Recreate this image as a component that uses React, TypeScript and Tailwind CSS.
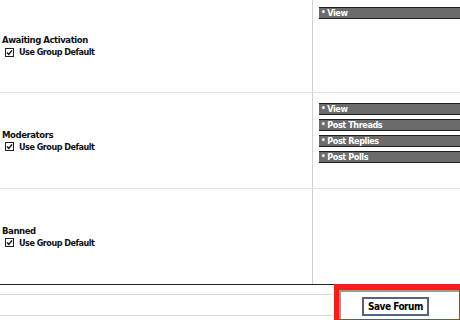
import React from "react"

const font = { fontFamily: '"DejaVu Sans Condensed", "DejaVu Sans", Verdana, sans-serif' }

function CheckBox() {
  return (
    <svg width="9" height="9" viewBox="0 0 9 9" className="shrink-0">
      <rect x="0.5" y="0.5" width="8" height="8" fill="#fff" stroke="#222" />
      <path d="M2 4.5 L3.8 6.5 L7 2.3" fill="none" stroke="#111" strokeWidth="1.4" />
    </svg>
  )
}

function PermBar({ label }: { label: string }) {
  return (
    <div className="h-[12px] bg-[#6b6b6b] border-y border-[#1e1e1e] flex items-center pl-[2px] text-white font-bold text-[9px] leading-none tracking-[-0.4px]">
      <span className="mr-[2px] text-[8px]">•</span>
      {label}
    </div>
  )
}

function GroupRow({ name, perms, height, top }: { name: string; perms: string[]; height: string; top: string }) {
  return (
    <div className={`flex ${height} border-b border-[#e2e2e2]`}>
      <div className="w-[312px] flex flex-col justify-center pl-[2px]">
        <div className="font-bold text-[9.5px] text-[#111] leading-[12px] tracking-[-0.45px]">{name}</div>
        <div className="flex items-center gap-[5px] pl-[3px] font-bold text-[9px] text-[#111] leading-[12px] tracking-[-0.5px]">
          <CheckBox />
          Use Group Default
        </div>
      </div>
      <div className={`flex-1 border-l border-[#d0d0d0] pl-[6px] ${top} flex flex-col gap-[4px]`}>
        {perms.map((p) => (
          <PermBar key={p} label={p} />
        ))}
      </div>
    </div>
  )
}

export default function App() {
  return (
    <div className="w-[460px] h-[320px] bg-white overflow-hidden relative" style={font}>
      <GroupRow name="Awaiting Activation" perms={["View"]} height="h-[93px]" top="pt-[7px]" />
      <GroupRow
        name="Moderators"
        perms={["View", "Post Threads", "Post Replies", "Post Polls"]}
        height="h-[96px]"
        top="pt-[10px]"
      />
      <GroupRow name="Banned" perms={[]} height="h-[95px] border-b-0" top="" />

      {/* footer */}
      <div className="h-[10px] border-t border-[#222]" />
      <div className="h-[22px] border-y border-[#dcdcdc]" />

      {/* highlighted save button */}
      <div className="absolute left-[334px] top-[284px] w-[130px] h-[40px] border-[5px] border-t-[6px] border-[#ff1a1a] bg-[#f4f4f4] flex items-start">
        <div className="w-full h-full border-l-[2px] border-t-[2px] border-[#9a9a9a] bg-white flex items-start pl-[21px] pt-[5px]">
          <button className="h-[19px] px-[4px] border-[2px] border-[#5e5e80] bg-white text-[10px] font-bold text-black leading-none tracking-[-0.5px]">
            Save Forum
          </button>
        </div>
      </div>
    </div>
  )
}
